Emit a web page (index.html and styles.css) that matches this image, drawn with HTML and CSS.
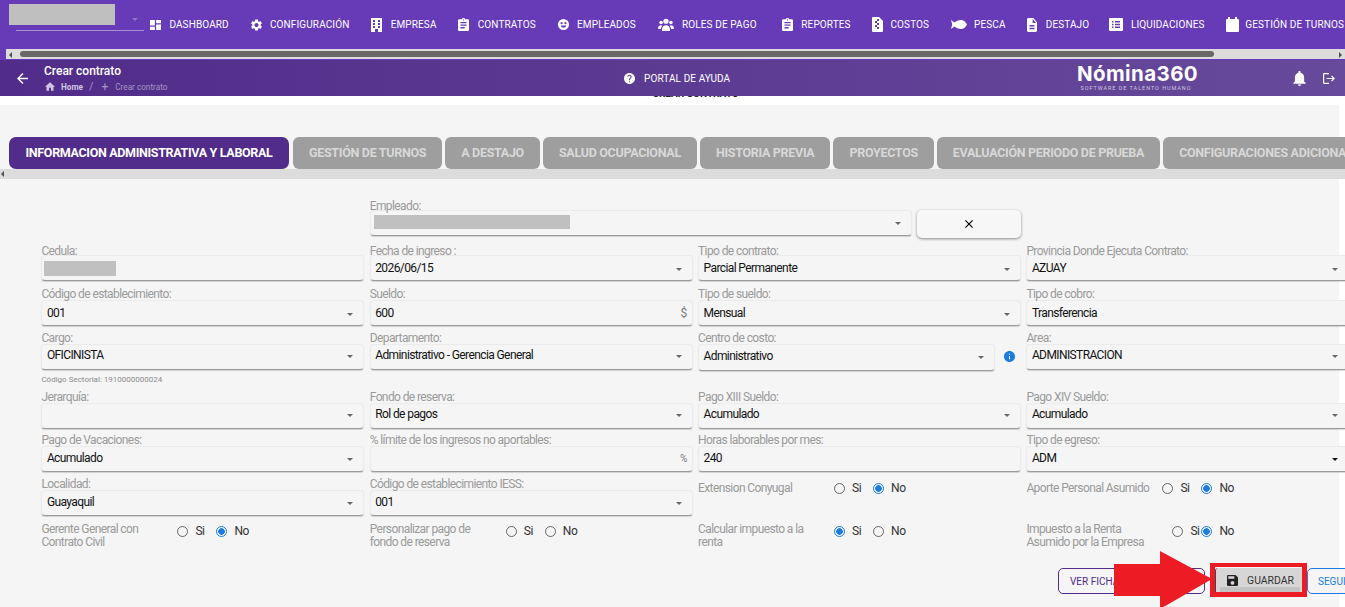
FILE: index.html
```html
<!DOCTYPE html>
<html lang="es">
  <head>
    <meta charset="UTF-8" />
    <meta name="viewport" content="width=device-width, initial-scale=1.0" />
    <title>Crear contrato</title>
    <link rel="stylesheet" href="styles.css">
  </head>
  <body>
    <!-- menu principal -->
    <div class="topbar">
      <div class="menu-row">
        <div class="company">
          <div class="company-name"></div>
          <span class="company-line"></span>
        </div>
        <ul class="nav">
          <li><svg width="11" height="10" viewBox="3 3 18 18" preserveAspectRatio="none"><path d="M3 13h8V3H3v10zm0 8h8v-6H3v6zm10 0h8V11h-8v10zm0-18v6h8V3h-8z"/></svg>DASHBOARD</li>
          <li><svg width="11" height="12" viewBox="2.5 2 19 20"><path d="M19.14 12.94c.04-.3.06-.61.06-.94 0-.32-.02-.64-.07-.94l2.03-1.58a.49.49 0 0 0 .12-.61l-1.92-3.32a.488.488 0 0 0-.59-.22l-2.39.96c-.5-.38-1.03-.7-1.62-.94l-.36-2.54a.484.484 0 0 0-.48-.41h-3.84c-.24 0-.43.17-.47.41l-.36 2.54c-.59.24-1.13.57-1.62.94l-2.39-.96c-.22-.08-.47 0-.59.22L2.74 8.87c-.12.21-.08.47.12.61l2.03 1.58c-.05.3-.09.63-.09.94s.02.64.07.94l-2.03 1.58a.49.49 0 0 0-.12.61l1.92 3.32c.12.22.37.29.59.22l2.39-.96c.5.38 1.03.7 1.62.94l.36 2.54c.05.24.24.41.48.41h3.84c.24 0 .44-.17.47-.41l.36-2.54c.59-.24 1.13-.56 1.62-.94l2.39.96c.22.08.47 0 .59-.22l1.92-3.32c.12-.22.07-.47-.12-.61l-2.01-1.58zM12 15.6c-1.98 0-3.6-1.62-3.6-3.6s1.62-3.6 3.6-3.6 3.6 1.62 3.6 3.6-1.62 3.6-3.6 3.6z"/></svg>CONFIGURACIÓN</li>
          <li><svg width="11" height="14" viewBox="0 0 11 14"><path fill-rule="evenodd" d="M0 0h11v14H7v-3H4v3H0zM2 2v2h2V2zm0 3v2h2V5zm0 3v2h2V8zm5-6v2h2V2zm0 3v2h2V5zm0 3v2h2V8z"/></svg>EMPRESA</li>
          <li><svg width="11" height="13" viewBox="3 1 18 20" preserveAspectRatio="none"><path d="M19 3h-4.18C14.4 1.84 13.3 1 12 1s-2.4.84-2.82 2H5c-1.1 0-2 .9-2 2v14c0 1.1.9 2 2 2h14c1.1 0 2-.9 2-2V5c0-1.1-.9-2-2-2zm-7 0c.55 0 1 .45 1 1s-.45 1-1 1-1-.45-1-1 .45-1 1-1zm2 14H7v-2h7v2zm3-4H7v-2h10v2zm0-4H7V7h10v2z"/></svg>CONTRATOS</li>
          <li><svg width="11" height="11" viewBox="2 2 20 20"><path fill-rule="evenodd" d="M12 2a10 10 0 1 0 0 20 10 10 0 0 0 0-20zM8.5 7.5a2 2 0 1 1 0 4 2 2 0 0 1 0-4zm7 0a2 2 0 1 1 0 4 2 2 0 0 1 0-4zM7 14h10c-.6 2.4-2.6 4-5 4s-4.4-1.6-5-4z"/></svg>EMPLEADOS</li>
          <li class="nav-roles"><svg width="16" height="13" viewBox="0 0 24 20"><circle cx="12" cy="5" r="4"/><circle cx="4.5" cy="7" r="2.8"/><circle cx="19.5" cy="7" r="2.8"/><path d="M6 20v-3c0-3.5 2.5-6 6-6s6 2.5 6 6v3zM0 17v-2c0-2.500 1.800-4 4-4 1 0 1.800.3 2.500.8C5 13 4.300 15 4.300 17zM24 17v-2c0-2.500-1.800-4-4-4-1 0-1.800.3-2.500.8 1.500 1.200 2.200 3.200 2.200 5.200z"/></svg>ROLES DE PAGO</li>
          <li><svg width="11" height="13" viewBox="3 1 18 20" preserveAspectRatio="none"><path d="M19 3h-4.18C14.4 1.84 13.3 1 12 1s-2.4.84-2.82 2H5c-1.1 0-2 .9-2 2v14c0 1.1.9 2 2 2h14c1.1 0 2-.9 2-2V5c0-1.1-.9-2-2-2zm-7 0c.55 0 1 .45 1 1s-.45 1-1 1-1-.45-1-1 .45-1 1-1zm2 14H7v-2h7v2zm3-4H7v-2h10v2zm0-4H7V7h10v2z"/></svg>REPORTES</li>
          <li class="tight"><svg width="11" height="15" viewBox="0 0 11 15"><path fill-rule="evenodd" d="M1 0h6l4 4v10a1 1 0 0 1-1 1H1a1 1 0 0 1-1-1V1a1 1 0 0 1 1-1zM5 2v2h2V2zM3 4v2h2V4zm2 2v2h2V6zM3 8v2h2V8zm2 2v2h2v-2z"/></svg>COSTOS</li>
          <li class="tight"><svg width="16" height="9" viewBox="0 0 16 9"><path d="M0 0l3.5 2.500C5 1 7.500 0 10 0c2.600 0 4.800 1.800 6 4.500C14.800 7.200 12.600 9 10 9 7.500 9 5 8 3.500 6.500L0 9l1.200-4.500z"/></svg>PESCA</li>
          <li class="nav-destajo"><svg width="10" height="14" viewBox="4 2 16 20" preserveAspectRatio="none"><path d="M14 2H6c-1.100 0-1.990.9-1.990 2L4 20c0 1.100.89 2 1.990 2H18c1.100 0 2-.9 2-2V8l-6-6zm2 16H8v-2h8v2zm0-4H8v-2h8v2zm-3-5V3.500L18.500 9H13z"/></svg>DESTAJO</li>
          <li><svg width="14" height="13" viewBox="0 0 14 13"><path fill-rule="evenodd" d="M1 0h12a1 1 0 0 1 1 1v11a1 1 0 0 1-1 1H1a1 1 0 0 1-1-1V1a1 1 0 0 1 1-1zm2 3v1.500h1.500V3zm3 0v1.500h5V3zM3 5.800v1.500h1.500V5.800zm3 0v1.500h5V5.800zM3 8.600v1.500h1.500V8.600zm3 0v1.500h5V8.600z"/></svg>LIQUIDACIONES</li>
          <li class="tighter"><svg width="13" height="15" viewBox="0 0 13 15"><path d="M2 0h2v2h5V0h2v2h1a1 1 0 0 1 1 1v11a1 1 0 0 1-1 1H1a1 1 0 0 1-1-1V3a1 1 0 0 1 1-1h1z"/></svg>GESTIÓN DE TURNOS</li>
        </ul>
      </div>
      <div class="hscroll">
        <span class="arrow-left"></span>
        <div class="hscroll-thumb"></div>
        <span class="arrow-right"></span>
      </div>
    </div>

    <!-- cabecera de la pagina -->
    <div class="page-head">
      <svg class="back-icon" width="11" height="11" viewBox="4 4 16 16"><path d="M20 11H7.83l5.59-5.59L12 4l-8 8 8 8 1.41-1.41L7.83 13H20v-2z"/></svg>
      <div class="crumbs">
        <div class="crumbs-title">Crear contrato</div>
        <div class="crumbs-path">
          <svg width="10" height="9" viewBox="2 3 20 17"><path d="M10 20v-6h4v6h5v-8h3L12 3 2 12h3v8z"/></svg>
          <b>Home</b>
          <span class="sep">/</span>
          <span class="plus">+</span>
          <span>Crear contrato</span>
        </div>
      </div>
      <div class="help">
        <svg width="11" height="11" viewBox="2 2 20 20"><path d="M12 2C6.48 2 2 6.48 2 12s4.48 10 10 10 10-4.48 10-10S17.52 2 12 2zm1 17h-2v-2h2v2zm2.07-7.750l-.9.92C13.45 12.9 13 13.5 13 15h-2v-.5c0-1.1.45-2.1 1.17-2.83l1.24-1.26c.37-.36.59-.86.59-1.41 0-1.1-.9-2-2-2s-2 .9-2 2H8c0-2.21 1.79-4 4-4s4 1.79 4 4c0 .88-.36 1.68-.93 2.25z"/></svg>
        PORTAL DE AYUDA
      </div>
      <div class="brand">
        <div class="brand-name">Nómina360</div>
        <div class="brand-sub">SOFTWARE DE TALENTO HUMANO</div>
      </div>
      <svg class="bell" width="13" height="15" viewBox="4 2.5 16 19.5"><path d="M12 22c1.1 0 2-.9 2-2h-4c0 1.1.9 2 2 2zm6-6v-5c0-3.07-1.63-5.64-4.5-6.32V4c0-.83-.67-1.5-1.5-1.5s-1.5.67-1.5 1.5v.68C7.64 5.36 6 7.92 6 11v5l-2 2v1h16v-1l-2-2z"/></svg>
      <svg class="exit" width="12" height="11" viewBox="2 3 20 18"><path d="M17 7l-1.41 1.41L18.17 11H8v2h10.17l-2.58 2.58L17 17l5-5zM4 5h8V3H4c-1.1 0-2 .9-2 2v14c0 1.1.9 2 2 2h8v-2H4V5z"/></svg>
    </div>

    <div class="page-title"><span>CREAR CONTRATO</span></div>

    <div class="panel">
      <div class="tabs">
        <div class="tab active">INFORMACION ADMINISTRATIVA Y LABORAL</div>
        <div class="tab">GESTIÓN DE TURNOS</div>
        <div class="tab">A DESTAJO</div>
        <div class="tab">SALUD OCUPACIONAL</div>
        <div class="tab">HISTORIA PREVIA</div>
        <div class="tab">PROYECTOS</div>
        <div class="tab">EVALUACIÓN PERIODO DE PRUEBA</div>
        <div class="tab">CONFIGURACIONES ADICIONALES</div>
      </div>
      <div class="tabs-scroll"><span class="arrow-left"></span></div>

      <div class="form">
        <!-- fila 1 -->
        <div class="field-wide">
          <div class="field">
            <label>Empleado:</label>
            <div class="input select"><span class="hidden-value emp"></span></div>
          </div>
          <button class="clear-btn"><svg width="8" height="8" viewBox="5 5 14 14"><path d="M19 6.41L17.59 5 12 10.59 6.41 5 5 6.41 10.59 12 5 17.59 6.41 19 12 13.41 17.59 19 19 17.59 13.41 12z"/></svg></button>
        </div>

        <!-- fila 2 -->
        <div class="field">
          <label>Cedula:</label>
          <div class="input"><span class="hidden-value ced"></span></div>
        </div>
        <div class="field">
          <label>Fecha de ingreso :</label>
          <div class="input select">2026/06/15</div>
        </div>
        <div class="field">
          <label>Tipo de contrato:</label>
          <div class="input select">Parcial Permanente</div>
        </div>
        <div class="field">
          <label>Provincia Donde Ejecuta Contrato:</label>
          <div class="input select">AZUAY</div>
        </div>

        <!-- fila 3 -->
        <div class="field">
          <label>Código de establecimiento:</label>
          <div class="input select">001</div>
        </div>
        <div class="field">
          <label>Sueldo:</label>
          <div class="input">600<span class="suffix">$</span></div>
        </div>
        <div class="field">
          <label>Tipo de sueldo:</label>
          <div class="input select">Mensual</div>
        </div>
        <div class="field">
          <label>Tipo de cobro:</label>
          <div class="input">Transferencia</div>
        </div>

        <!-- fila 4 -->
        <div class="field">
          <label>Cargo:</label>
          <div class="input select">OFICINISTA</div>
          <div class="hint">Código Sectorial: 1910000000024</div>
        </div>
        <div class="field">
          <label>Departamento:</label>
          <div class="input select">Administrativo - Gerencia General</div>
        </div>
        <div class="field-info">
          <div class="field">
            <label>Centro de costo:</label>
            <div class="input select">Administrativo</div>
          </div>
          <svg width="11" height="11" viewBox="2 2 20 20"><path d="M12 2C6.48 2 2 6.48 2 12s4.48 10 10 10 10-4.48 10-10S17.52 2 12 2zm1 15h-2v-6h2v6zm0-8h-2V7h2v2z"/></svg>
        </div>
        <div class="field">
          <label>Area:</label>
          <div class="input select">ADMINISTRACION</div>
        </div>

        <!-- fila 5 -->
        <div class="field">
          <label>Jerarquía:</label>
          <div class="input select"></div>
        </div>
        <div class="field">
          <label>Fondo de reserva:</label>
          <div class="input select">Rol de pagos</div>
        </div>
        <div class="field">
          <label>Pago XIII Sueldo:</label>
          <div class="input select">Acumulado</div>
        </div>
        <div class="field">
          <label>Pago XIV Sueldo:</label>
          <div class="input select">Acumulado</div>
        </div>

        <!-- fila 6 -->
        <div class="field">
          <label>Pago de Vacaciones:</label>
          <div class="input select">Acumulado</div>
        </div>
        <div class="field">
          <label>% límite de los ingresos no aportables:</label>
          <div class="input"><span class="suffix small">%</span></div>
        </div>
        <div class="field">
          <label>Horas laborables por mes:</label>
          <div class="input">240</div>
        </div>
        <div class="field">
          <label>Tipo de egreso:</label>
          <div class="input select dark">ADM</div>
        </div>

        <!-- fila 7 -->
        <div class="field">
          <label>Localidad:</label>
          <div class="input select">Guayaquil</div>
        </div>
        <div class="field">
          <label>Código de establecimiento IESS:</label>
          <div class="input select">001</div>
        </div>
        <div class="radio-row inline">
          <div class="radio-label">Extension Conyugal</div>
          <span class="radio"></span><span class="radio-text">Si</span>
          <span class="radio on"></span><span class="radio-text">No</span>
        </div>
        <div class="radio-row inline">
          <div class="radio-label">Aporte Personal Asumido</div>
          <span class="radio"></span><span class="radio-text">Si</span>
          <span class="radio on"></span><span class="radio-text">No</span>
        </div>

        <!-- fila 8 -->
        <div class="radio-row">
          <div class="radio-label">Gerente General con Contrato Civil</div>
          <span class="radio"></span><span class="radio-text">Si</span>
          <span class="radio on"></span><span class="radio-text">No</span>
        </div>
        <div class="radio-row">
          <div class="radio-label">Personalizar pago de fondo de reserva</div>
          <span class="radio"></span><span class="radio-text">Si</span>
          <span class="radio"></span><span class="radio-text">No</span>
        </div>
        <div class="radio-row">
          <div class="radio-label">Calcular impuesto a la renta</div>
          <span class="radio on"></span><span class="radio-text">Si</span>
          <span class="radio"></span><span class="radio-text">No</span>
        </div>
        <div class="radio-row tight">
          <div class="radio-label">Impuesto a la Renta Asumido por la Empresa</div>
          <span class="radio"></span><span class="radio-text">Si</span>
          <span class="radio on"></span><span class="radio-text">No</span>
        </div>
      </div>

      <div class="actions">
        <button class="btn btn-ficha">VER FICHA</button>
        <button class="btn btn-save">
          <svg width="11" height="11" viewBox="3 3 18 18"><path d="M17 3H5c-1.11 0-2 .9-2 2v14c0 1.1.89 2 2 2h14c1.1 0 2-.9 2-2V7l-4-4zm-5 16c-1.66 0-3-1.34-3-3s1.34-3 3-3 3 1.34 3 3-1.34 3-3 3zm3-10H5V5h10v4z"/></svg>
          GUARDAR
        </button>
        <button class="btn btn-next">SEGUIR</button>
      </div>
    </div>

    <!-- marca roja sobre la captura -->
    <div class="mark-box"></div>
    <svg class="mark-arrow" width="100" height="60" viewBox="0 0 100 60"><polygon points="0,13 46,13 46,0 98,28 46,58 46,45 0,45"/></svg>
  </body>
</html>
```

FILE: styles.css
```css
* {
  padding: 0;
  margin: 0;
  box-sizing: border-box;
  list-style: none;
}

html,
body {
  height: 100%;
  overflow: hidden;
}

body {
  position: relative;
  width: 1345px;
  height: 607px;
  background: #fff;
  font-family: Roboto, "Liberation Sans", sans-serif;
  font-size: 12px;
  color: #111;
}

/* menu principal */
.topbar {
  height: 60px;
  background: #673ab7;
}

.menu-row {
  display: flex;
  height: 49px;
}

.company {
  position: relative;
  width: 150px;
  flex-shrink: 0;
  padding: 4px 0 0 9px;
}

.company::after {
  content: "";
  position: absolute;
  left: 132px;
  top: 18px;
  border-top: 3px solid #8f76c8;
  border-left: 3.5px solid transparent;
  border-right: 3.5px solid transparent;
}

.company-name {
  width: 106px;
  height: 21px;
  background: #bfbfbf;
}

.company-line {
  display: block;
  width: 128px;
  height: 6px;
  margin-left: 7px;
  border-bottom: 1px solid #a98fd8;
}

.nav {
  display: flex;
  align-items: center;
  gap: 21.8px;
  white-space: nowrap;
  color: #fff;
  font-size: 10px;
  letter-spacing: 0.12px;
}

.nav li {
  display: flex;
  align-items: center;
  gap: 8.4px;
}

.nav li.tight {
  gap: 7px;
}

.nav li.tighter {
  gap: 6px;
}

.nav li.nav-roles {
  margin-right: 3.5px;
}

.nav li.nav-destajo {
  margin-right: -2.5px;
}

.nav svg {
  fill: #fff;
}

.hscroll {
  position: relative;
  height: 10px;
  margin-left: 6px;
  background: #dcdcdc;
  padding: 2px 0 0 14px;
}

.hscroll-thumb {
  width: 1194px;
  height: 6px;
  border-radius: 3px;
  background: #686868;
}

.arrow-left,
.arrow-right {
  position: absolute;
  top: 3px;
  border-top: 3px solid transparent;
  border-bottom: 3px solid transparent;
}

.arrow-left {
  left: 3px;
  border-right: 3px solid #505050;
}

.arrow-right {
  right: 3px;
  border-left: 3px solid #505050;
}

/* cabecera */
.page-head {
  display: flex;
  align-items: center;
  height: 36px;
  padding-left: 17px;
  background: linear-gradient(90deg, #512c8a, #674a9b);
  color: #fff;
}

.back-icon {
  fill: #fff;
  margin-right: 16px;
}

.crumbs {
  width: 580px;
}

.crumbs-title {
  font-size: 12px;
  font-weight: 500;
  line-height: 17px;
}

.crumbs-path {
  display: flex;
  align-items: center;
  gap: 6px;
  height: 13px;
  padding-left: 1px;
  font-size: 8.2px;
  color: #a594c4;
}

.crumbs-path svg {
  fill: #d0c6e0;
}

.crumbs-path b {
  color: #cfc5e0;
  font-weight: 700;
}

.crumbs-path .sep {
  font-size: 11px;
}

.crumbs-path .plus {
  font-size: 12px;
  margin: 0 1px 0 2px;
}

.help {
  display: flex;
  align-items: center;
  gap: 9px;
  width: 453px;
  font-size: 10px;
  letter-spacing: 0.1px;
}

.help svg {
  fill: #fff;
}

.brand {
  width: 118px;
  margin-right: 98px;
  text-align: center;
}

.brand-name {
  font-family: Inter, "DejaVu Sans", sans-serif;
  font-size: 20.5px;
  font-weight: 700;
  line-height: 20px;
  letter-spacing: 0.4px;
  white-space: nowrap;
}

.brand-sub {
  font-size: 5.5px;
  line-height: 8px;
  letter-spacing: 0.95px;
  color: #cfc5e0;
  white-space: nowrap;
}

.bell {
  fill: #fff;
  margin-right: 17px;
}

.exit {
  fill: #fff;
}

.page-title {
  height: 9px;
  overflow: hidden;
  padding-left: 46px;
  text-align: center;
  font-size: 10px;
  font-weight: 700;
  color: #222;
}

.page-title span {
  display: block;
  margin-top: -8px;
  line-height: 12px;
}

/* contenido */
.panel {
  width: 1339px;
  height: 502px;
  background: #f5f5f5;
  padding-top: 32px;
}

.tabs {
  display: flex;
  gap: 3px;
  width: 1345px;
  height: 32px;
  padding-left: 9px;
  overflow: hidden;
}

.tab {
  flex-shrink: 0;
  display: flex;
  align-items: center;
  padding: 0 16px 1px;
  border-radius: 6px;
  background: #9e9e9e;
  color: #d8d8d8;
  font-size: 12.5px;
  font-weight: 700;
  letter-spacing: -0.3px;
  white-space: nowrap;
}

.tab.active {
  margin-right: 1px;
  padding: 0 16.5px 1px;
  background: #512c8a;
  color: #fff;
  border-radius: 7px;
  letter-spacing: -0.33px;
}

.tabs-scroll {
  position: relative;
  width: 1345px;
  height: 10px;
  background: #dcdcdc;
}

.tabs-scroll .arrow-left {
  left: 1px;
  top: 2px;
}

.form {
  display: grid;
  grid-template-columns: repeat(4, 323px);
  grid-template-rows: 45px 45px 44px 59px 43px 44px 50px 26px;
  column-gap: 5.33px;
  margin-top: 13px;
  padding-left: 41.4px;
}

.field-wide {
  grid-column: 2 / -1;
  display: flex;
  gap: 5.5px;
}

.field-wide .field {
  flex: 0 0 542px;
}

.field label {
  display: block;
  height: 18px;
  padding-top: 6px;
  line-height: 12px;
  color: #9a9a9a;
  letter-spacing: -0.6px;
  white-space: nowrap;
}

.input {
  display: flex;
  align-items: center;
  height: 26px;
  padding: 0 6px 2px 4.5px;
  border: 1px solid #ebebeb;
  border-bottom: 1px solid #9a9a9a;
  border-radius: 4px;
  background: #f5f5f5;
  box-shadow: 0 1px 1px rgba(0, 0, 0, 0.15);
  letter-spacing: -0.6px;
  white-space: nowrap;
}

/* las dos primeras filas llevan la etiqueta y el texto un poco mas abajo */
.form > :nth-child(-n+5) label {
  padding-top: 8px;
}

.form > :nth-child(n+2):nth-child(-n+9) .input {
  padding-bottom: 0;
}

.form > :nth-child(n+10):nth-child(-n+17) .input {
  padding-bottom: 4px;
}

.select::after {
  content: "";
  margin: 3px 4px 0 auto;
  border-top: 3px solid #666;
  border-left: 3.5px solid transparent;
  border-right: 3.5px solid transparent;
}

.select.dark::after {
  border-top-color: #111;
}

.suffix {
  margin-left: auto;
  margin-right: -1px;
  color: #777;
}

.suffix.small {
  font-size: 10px;
}

.hidden-value {
  display: block;
  background: #c0c0c0;
}

.hidden-value.emp {
  width: 196px;
  height: 14px;
  margin-left: -1.5px;
}

.hidden-value.ced {
  width: 72px;
  height: 15px;
  margin-left: -2.5px;
}

.hint {
  margin-top: 5px;
  font-size: 8px;
  line-height: 10px;
  color: #8a8a8a;
}

.clear-btn {
  display: flex;
  align-items: center;
  justify-content: center;
  width: 104px;
  height: 28px;
  margin-top: 18px;
  border: 0;
  border-radius: 5px;
  background: #f7f7f7;
  box-shadow: 0 1px 3px rgba(0, 0, 0, 0.45);
}

.field-info {
  display: flex;
  align-items: flex-start;
}

.field-info .field {
  width: 297px;
}

.form > .field-info .input {
  height: 27px;
  padding-bottom: 2px;
}

.field-info svg {
  fill: #1a7be0;
  margin: 25px 0 0 9px;
}

.radio-row {
  display: flex;
  align-items: flex-start;
  line-height: 13px;
}

.radio-row.inline {
  padding-top: 10px;
}

.radio-label {
  width: 136px;
  padding: 1px 20px 0 0;
  color: #9a9a9a;
  letter-spacing: -0.6px;
}

.radio-row.inline .radio-label {
  padding: 0;
  white-space: nowrap;
}

.radio-row.tight .radio-label {
  width: 146px;
}

.radio {
  flex-shrink: 0;
  width: 11px;
  height: 11px;
  margin-top: 1px;
  border: 1px solid #666;
  border-radius: 50%;
}

.radio.on {
  border-color: #1a7be0;
  background: radial-gradient(circle, #1a7be0 0 3px, transparent 3.5px);
}

.radio-text {
  flex-shrink: 0;
  width: 28px;
  padding-left: 7px;
  color: #333;
  letter-spacing: -0.4px;
}

.radio-row:not(.inline) .radio {
  margin-top: 4px;
}

.radio-row:not(.inline) .radio-text {
  margin-top: 3px;
}

.radio-row.tight .radio-text {
  width: 18px;
}

.actions {
  display: flex;
  align-items: flex-start;
  margin-top: 20px;
  padding-left: 1058px;
  width: 1345px;
}

.btn {
  display: flex;
  align-items: center;
  justify-content: center;
  flex-shrink: 0;
  height: 26px;
  border-radius: 5px;
  background: #f5f5f5;
  font-family: inherit;
  font-size: 10px;
}

.btn-ficha {
  justify-content: flex-start;
  width: 147px;
  padding-left: 11px;
  margin-right: 10px;
  border: 1px solid #512c8a;
  color: #512c8a;
}

.btn-save {
  position: relative;
  gap: 9px;
  width: 88px;
  margin-right: 4px;
  padding: 0 0 2px 2px;
  border: 0;
  border-left: 1px solid #444;
  border-radius: 3px;
  background: #d6d6d6;
  color: #333;
  font-size: 10.4px;
}

.btn-save::after {
  content: "";
  position: absolute;
  left: 4px;
  right: 3px;
  bottom: 2px;
  height: 5px;
  background: #c2c2c2;
}

.btn-save svg {
  fill: #222;
}

.btn-next {
  justify-content: flex-start;
  width: 90px;
  padding-left: 10px;
  border: 1px solid #1a7be0;
  color: #1a7be0;
}

/* marca */
.mark-box {
  position: absolute;
  left: 1210px;
  top: 563px;
  width: 97px;
  height: 34px;
  border: solid #ed1c24;
  border-width: 4px 5px 5px 5px;
}

.mark-arrow {
  position: absolute;
  left: 1114px;
  top: 551px;
  fill: #ed1c24;
}
```
